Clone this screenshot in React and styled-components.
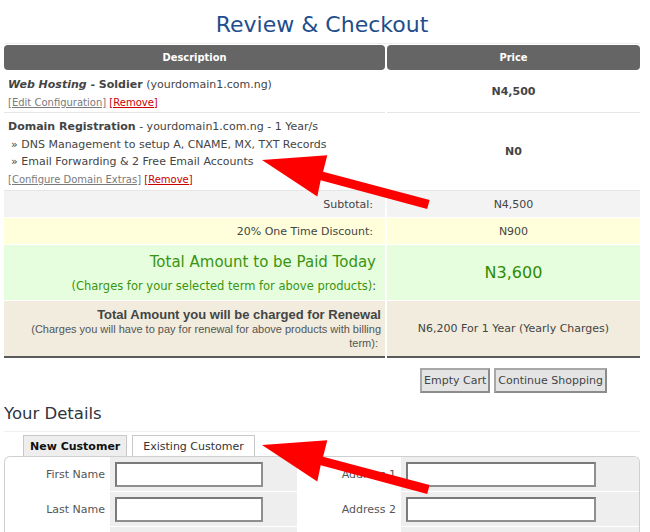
import React from "react";
import styled, { createGlobalStyle } from "styled-components";

const GlobalStyle = createGlobalStyle`
  html, body { margin: 0; padding: 0; background: #fff; }
  body {
    font-family: "DejaVu Sans", Verdana, sans-serif;
    font-size: 11px;
    color: #444;
  }
`;

const Page = styled.div`
  position: relative;
  width: 650px;
  height: 532px;
  overflow: hidden;
  padding: 0 10px 0 4px;
  box-sizing: border-box;
`;

const Title = styled.h1`
  margin: 0;
  padding-top: 10px;
  height: 33px;
  line-height: 30px;
  text-align: center;
  font-size: 22px;
  font-weight: normal;
  color: #1f4e8c;
`;

const Cart = styled.div`
  border-top: 1px solid #eee;
  padding-top: 1px;
  display: flex;
  flex-direction: column;
`;

const Row = styled.div`
  display: grid;
  grid-template-columns: 381px 253px;
  column-gap: 2px;
  margin-top: ${(p) => p.$gap || 0}px;
`;

const HeadCell = styled.div`
  height: 25px;
  background: #656565;
  border-radius: 4px;
  color: #fff;
  font-family: "DejaVu Sans Condensed", "DejaVu Sans", sans-serif;
  font-weight: bold;
  font-size: 11px;
  display: flex;
  align-items: center;
  justify-content: center;
`;

const ItemCell = styled.div`
  border-bottom: 1px solid #e6e6e6;
  padding: ${(p) => (p.$center ? "0" : `${p.$pt || 4}px 0 0 4px`)};
  box-sizing: border-box;
  height: ${(p) => p.$h + 1}px;
  display: flex;
  flex-direction: column;
  justify-content: ${(p) => (p.$center ? "center" : "flex-start")};
  align-items: ${(p) => (p.$center ? "center" : "stretch")};
  line-height: 17.5px;
  color: #444;
`;

const Price = styled.span`
  font-weight: bold;
  color: #444;
`;

const LinkRow = styled.div`
  font-size: 10px;
  line-height: 17px;
`;

const GrayLink = styled.a`
  color: #7a7a7a;
  text-decoration: underline;
`;

const RedLink = styled.a`
  color: #cc0000;
  text-decoration: underline;
`;

const Sub = styled.div`
  padding-left: 3px;
`;

const SumCell = styled.div`
  height: ${(p) => p.$h}px;
  background: ${(p) => p.$bg};
  display: flex;
  flex-direction: column;
  justify-content: center;
  align-items: ${(p) => (p.$right ? "flex-end" : "center")};
  padding-right: ${(p) => (p.$right ? p.$pr ?? 12 : 0)}px;
  text-align: ${(p) => (p.$right ? "right" : "center")};
  border-bottom: ${(p) => (p.$last ? "2px solid #5a5a5a" : "none")};
  color: #444;
`;

const GreenTitle = styled.div`
  font-size: 15px;
  line-height: 20px;
  color: #3a9410;
`;

const GreenNote = styled.div`
  font-size: 11.5px;
  line-height: 16px;
  margin-top: 6px;
  color: #3a9410;
  span { color: #444; }
`;

const GreenValue = styled.div`
  font-size: 16px;
  color: #2e8c00;
`;

const RenewTitle = styled.div`
  font-family: "Liberation Sans", Arial, sans-serif;
  font-weight: bold;
  font-size: 13px;
  line-height: 14px;
  color: #444;
`;

const RenewNote = styled.div`
  font-family: "Liberation Sans", Arial, sans-serif;
  font-size: 11px;
  line-height: 14px;
  color: #555;
`;

const Actions = styled.div`
  display: grid;
  grid-template-columns: 381px 253px;
  column-gap: 2px;
  margin-top: 10px;
`;

const ButtonGroup = styled.div`
  grid-column: 2;
  display: flex;
  justify-content: center;
  gap: 4px;
`;

const Button = styled.button`
  height: 25px;
  padding: 0 2px;
  font-family: "DejaVu Sans", Verdana, sans-serif;
  font-size: 11px;
  color: #444;
  background: #e4e4e4;
  border: 2px solid #8c8c8c;
  border-top-color: #a8a8a8;
  border-left-color: #a8a8a8;
`;

const SectionTitle = styled.h2`
  margin: 11px 0 0;
  padding-bottom: 7px;
  font-size: 16.5px;
  line-height: 20px;
  font-weight: normal;
  color: #2e3440;
  border-bottom: 1px solid #f0f0f0;
`;

const Tabs = styled.div`
  display: flex;
  gap: 5px;
  margin: 3px 0 0 19px;
`;

const Tab = styled.div`
  height: 20px;
  padding: 0 ${(p) => (p.$active ? 6 : 10)}px;
  display: flex;
  align-items: center;
  border: 1px solid #c8c8c8;
  border-bottom: none;
  background: ${(p) => (p.$active ? "#eeeeee" : "#ffffff")};
  font-weight: ${(p) => (p.$active ? "bold" : "normal")};
  color: ${(p) => (p.$active ? "#111" : "#333")};
  font-size: 11px;
`;

const FormBox = styled.div`
  border: 1px solid #cfcfcf;
  border-bottom: none;
  border-radius: 6px 6px 0 0;
  display: grid;
  grid-template-columns: 105px 187px 104px 238px;
  row-gap: 1px;
`;

const Label = styled.div`
  height: 34px;
  display: flex;
  align-items: center;
  justify-content: flex-end;
  padding-right: 5px;
  color: #555;
  font-size: 11px;
`;

const Field = styled.div`
  height: 34px;
  background: #eeeeee;
  display: flex;
  align-items: center;
  padding-left: 5px;
  border-radius: ${(p) => (p.$corner ? "0 5px 0 0" : "0")};
`;

const Input = styled.input`
  box-sizing: border-box;
  width: ${(p) => p.$w}px;
  height: 25px;
  background: #fff;
  border: 2px solid #8f8f8f;
  border-top-color: #7a7a7a;
  border-left-color: #7a7a7a;
  margin: 0;
`;

const Overlay = styled.svg`
  position: absolute;
  top: 0;
  left: 0;
  pointer-events: none;
`;

const arrow = (dy) =>
  [
    [262, 160],
    [327.3, 155.2],
    [323.1, 171.7],
    [429.6, 200.1],
    [427.2, 208.9],
    [320.7, 180.3],
    [317.3, 196.6],
  ]
    .map(([x, y]) => `${x},${y + dy}`)
    .join(" ");

export default function App() {
  return (
    <>
      <GlobalStyle />
      <Page>
        <Title>Review &amp; Checkout</Title>
        <Cart>
          <Row>
            <HeadCell>Description</HeadCell>
            <HeadCell>Price</HeadCell>
          </Row>
          <Row $gap={2}>
            <ItemCell $h={40} $pt={4}>
              <div>
                <b><i>Web Hosting</i> - Soldier</b> (yourdomain1.com.ng)
              </div>
              <LinkRow>
                <GrayLink>[Edit Configuration]</GrayLink>{" "}
                <RedLink>[Remove]</RedLink>
              </LinkRow>
            </ItemCell>
            <ItemCell $h={40} $center>
              <Price>N4,500</Price>
            </ItemCell>
          </Row>
          <Row>
            <ItemCell $h={77} $pt={5}>
              <div>
                <b>Domain Registration</b> - yourdomain1.com.ng - 1 Year/s
              </div>
              <Sub>» DNS Management to setup A, CNAME, MX, TXT Records</Sub>
              <Sub>» Email Forwarding &amp; 2 Free Email Accounts</Sub>
              <LinkRow>
                <GrayLink>[Configure Domain Extras]</GrayLink>{" "}
                <RedLink>[Remove]</RedLink>
              </LinkRow>
            </ItemCell>
            <ItemCell $h={77} $center>
              <Price>N0</Price>
            </ItemCell>
          </Row>
          <Row>
            <SumCell $h={26} $bg="#f3f3f3" $right>Subtotal:</SumCell>
            <SumCell $h={26} $bg="#f3f3f3">N4,500</SumCell>
          </Row>
          <Row $gap={1}>
            <SumCell $h={26} $bg="#ffffdb" $right>20% One Time Discount:</SumCell>
            <SumCell $h={26} $bg="#ffffdb">N900</SumCell>
          </Row>
          <Row $gap={1}>
            <SumCell $h={55} $bg="#e6fedd" $right $pr={9}>
              <GreenTitle>Total Amount to be Paid Today</GreenTitle>
              <GreenNote>
                (Charges for your selected term for above products)<span>:</span>
              </GreenNote>
            </SumCell>
            <SumCell $h={55} $bg="#e6fedd">
              <GreenValue>N3,600</GreenValue>
            </SumCell>
          </Row>
          <Row $gap={1}>
            <SumCell $h={55} $bg="#f1ecdd" $right $pr={4} $last>
              <RenewTitle>Total Amount you will be charged for Renewal</RenewTitle>
              <RenewNote>
                (Charges you will have to pay for renewal for above products with billing
                <br />
                term):&nbsp;
              </RenewNote>
            </SumCell>
            <SumCell $h={55} $bg="#f1ecdd" $last>
              N6,200 For 1 Year (Yearly Charges)
            </SumCell>
          </Row>
        </Cart>
        <Actions>
          <ButtonGroup>
            <Button>Empty Cart</Button>
            <Button>Continue Shopping</Button>
          </ButtonGroup>
        </Actions>
        <SectionTitle>Your Details</SectionTitle>
        <Tabs>
          <Tab $active>New Customer</Tab>
          <Tab>Existing Customer</Tab>
        </Tabs>
        <FormBox>
          <Label>First Name</Label>
          <Field><Input $w={148} /></Field>
          <Label>Address 1</Label>
          <Field $corner><Input $w={190} /></Field>
          <Label>Last Name</Label>
          <Field><Input $w={148} /></Field>
          <Label>Address 2</Label>
          <Field><Input $w={190} /></Field>
          <Label />
          <Field />
          <Label />
          <Field />
        </FormBox>
        <Overlay width="650" height="532" viewBox="0 0 650 532">
          <polygon points={arrow(0)} fill="#ff0000" />
          <polygon points={arrow(285)} fill="#ff0000" />
        </Overlay>
      </Page>
    </>
  );
}
